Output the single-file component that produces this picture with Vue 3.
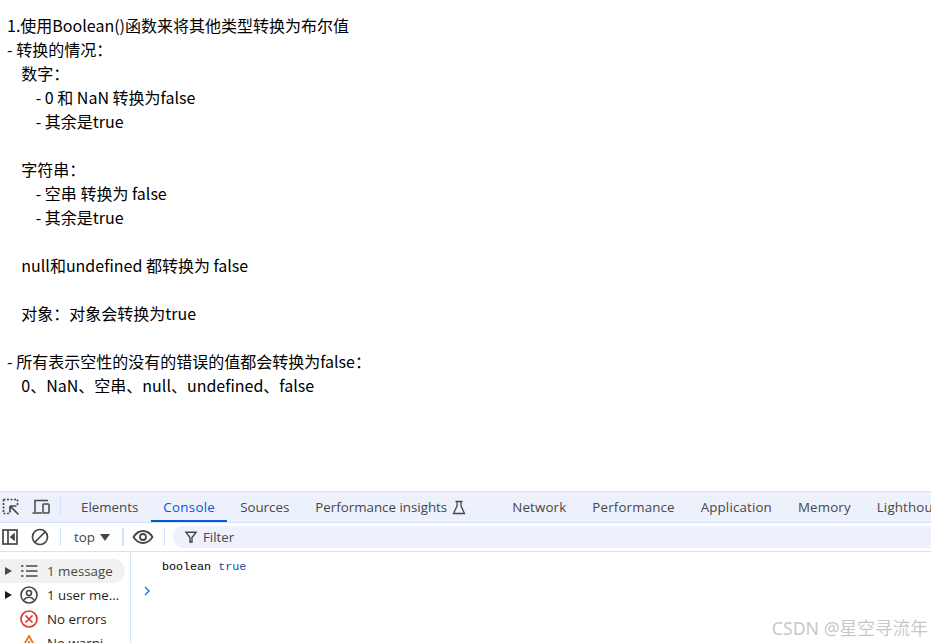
<script setup>
const lines = [
  '1.使用Boolean()函数来将其他类型转换为布尔值',
  '- 转换的情况：',
  '    数字：',
  '        - 0 和 NaN 转换为false',
  '        - 其余是true',
  ' ',
  '    字符串：',
  '        - 空串 转换为 false',
  '        - 其余是true',
  ' ',
  '    null和undefined 都转换为 false',
  ' ',
  '    对象：对象会转换为true',
  ' ',
  '- 所有表示空性的没有的错误的值都会转换为false：',
  '    0、NaN、空串、null、undefined、false',
]
const tabs = [
  { name: 'Elements' },
  { name: 'Console', active: true },
  { name: 'Sources' },
  { name: 'Performance insights', flask: true },
  { name: 'Network', wide: true },
  { name: 'Performance', wide: true },
  { name: 'Application', wide: true },
  { name: 'Memory', wide: true },
  { name: 'Lighthouse', wide: true },
]
</script>

<template>
  <div class="page">
    <main class="doc">
      <div v-for="(l, i) in lines" :key="i" class="line">{{ l }}</div>
    </main>
    <section class="devtools">
      <div class="tabbar">
        <span class="ico-wrap first">
          <svg width="20" height="20" viewBox="0 0 20 20" fill="none" stroke="#474747" stroke-width="1.7">
            <path d="M2.500 2.500h14M2.500 2.500v14M2.500 16.500h6M16.500 2.500v6" stroke-dasharray="2 1.500" />
            <path d="M9 9l8.500 8.500M9 9h6.500M9 9v6.500" />
          </svg>
        </span>
        <span class="ico-wrap">
          <svg width="20" height="20" viewBox="0 0 20 20" fill="none" stroke="#474747" stroke-width="1.500">
            <path d="M4 15V3.500h13" />
            <path d="M1.500 16H11" />
            <rect x="12" y="7" width="6" height="9" rx=".8" />
          </svg>
        </span>
        <span class="sep"></span>
        <div v-for="t in tabs" :key="t.name" class="tab" :class="{ active: t.active, flasked: t.flask, wide: t.wide }">
          {{ t.name }}
          <svg v-if="t.flask" class="flask" width="14" height="15" viewBox="0 0 14 15" fill="none" stroke="#474747" stroke-width="1.300">
            <path d="M3.500 1.500h7M5 1.500v4.500L1.500 13.500h11L9 6V1.500" />
          </svg>
        </div>
      </div>
      <div class="toolbar">
        <svg class="tool-ico" width="18" height="18" viewBox="0 0 18 18" fill="none" stroke="#474747" stroke-width="1.700">
          <rect x="2" y="2" width="14" height="14" />
          <path d="M7 2v14" />
          <path d="M13 6.500L10 9l3 2.500z" fill="#474747" />
        </svg>
        <svg class="tool-ico ban" width="18" height="18" viewBox="0 0 18 18" fill="none" stroke="#474747" stroke-width="1.700">
          <circle cx="9" cy="9" r="7.500" />
          <path d="M4 14L14 4" />
        </svg>
        <span class="sep tool first-sep"></span>
        <span class="ctx">top</span>
        <span class="caret"></span>
        <span class="sep tool accent"></span>
        <svg class="eye" width="22" height="16" viewBox="0 0 22 16" fill="none" stroke="#474747" stroke-width="1.800">
          <path d="M1.500 8C4 4 7 2 11 2S18 4 20.500 8C18 12 15 14 11 14S4 12 1.500 8z" />
          <circle cx="11" cy="8" r="3" />
        </svg>
        <span class="sep tool last-sep"></span>
        <div class="filter">
          <svg width="12" height="12" viewBox="0 0 12 12" fill="none" stroke="#474747" stroke-width="1.400">
            <path d="M.8 1.200h10.400L7 6.500V11H5V6.500z" />
          </svg>
          <span>Filter</span>
        </div>
      </div>
      <div class="body">
        <aside class="side">
          <div class="row selected">
            <span class="arrow"></span>
            <svg class="row-ico" width="18" height="18" viewBox="0 0 18 18" fill="none" stroke="#474747" stroke-width="1.700">
              <path d="M6 4h11.500M6 9h11.500M6 14h11.500M1 4h2.500M1 9h2.500M1 14h2.500" />
            </svg>
            <span>1 message</span>
          </div>
          <div class="row dark">
            <span class="arrow darkarrow"></span>
            <svg class="row-ico" width="18" height="18" viewBox="0 0 18 18" fill="none" stroke="#474747" stroke-width="1.600">
              <circle cx="9" cy="9" r="8" />
              <circle cx="9" cy="7" r="2.500" />
              <path d="M3.800 14c1.500-2 3.300-2.700 5.200-2.700s3.700.7 5.200 2.700" />
            </svg>
            <span>1 user me...</span>
          </div>
          <div class="row dark">
            <span class="arrow none"></span>
            <svg class="row-ico" width="18" height="18" viewBox="0 0 18 18" fill="none" stroke="#dc362e" stroke-width="1.700">
              <circle cx="9" cy="9" r="8" />
              <path d="M5.500 5.500l7 7M12.500 5.500l-7 7" />
            </svg>
            <span>No errors</span>
          </div>
          <div class="row dark">
            <span class="arrow none"></span>
            <svg class="row-ico" width="18" height="18" viewBox="0 0 18 18" fill="none" stroke="#e8710a" stroke-width="1.700">
              <path d="M9 2L17 16H1z" />
              <path d="M9 7v5" />
            </svg>
            <span>No warni</span>
          </div>
        </aside>
        <div class="console">
          <div class="log"><span>boolean</span> <span class="kw">true</span></div>
          <svg class="prompt" width="8" height="10" viewBox="0 0 8 10" fill="none" stroke="#1a73e8" stroke-width="1.400">
            <path d="M2 1l4 4-4 4" />
          </svg>
        </div>
      </div>
      <div class="mark">CSDN @星空寻流年</div>
    </section>
  </div>
</template>

<style>
html, body { margin: 0; background: #fff; overflow: hidden; }
</style>

<style scoped>
.page {
  width: 931px;
  height: 643px;
  display: flex;
  flex-direction: column;
  overflow: hidden;
  background: #fff;
}
.doc {
  height: 491px;
  box-sizing: border-box;
  padding: 13px 0 0 7px;
  flex: none;
  font: 16px/24px "Noto Sans CJK SC", "Noto Sans", sans-serif;
  color: #000;
}
.line { white-space: pre; height: 24px; }
.devtools {
  position: relative;
  flex: 1;
  min-height: 0;
  font-family: "Open Sans", "Noto Sans", sans-serif;
  font-size: 13.330px;
  color: #474747;
}
.tabbar {
  height: 30px;
  border-top: 1px solid #d3e3fd;
  border-bottom: 1px solid #d3e3fd;
  background: #edf1fb;
  display: flex;
  align-items: center;
  overflow: hidden;
  white-space: nowrap;
}
.ico-wrap { width: 20px; height: 20px; margin-left: 10px; flex: none; display: flex; }
.ico-wrap.first { margin-left: 1px; }
.sep { width: 1px; height: 20px; background: #d3e3fd; flex: none; margin: 0 7px 0 9px; }
.tab {
  height: 30px;
  line-height: 30px;
  padding: 0 13px;
  flex: none;
  box-sizing: border-box;
  position: relative;
}
.tab.wide { letter-spacing: .15px; }
.tab.active { color: #0b57d0; border-bottom: 2px solid #0b57d0; padding: 0 12px; letter-spacing: .28px; }
.tab.flasked { padding-right: 33px; display: flex; align-items: center; gap: 5px; }
.toolbar {
  height: 28px;
  display: flex;
  align-items: center;
  border-bottom: 1px solid #d9e2f5;
  background: #fff;
}
.tool-ico { margin-left: 1px; flex: none; }
.tool-ico.ban { margin-left: 12px; }
.sep.tool { height: 18px; }
.sep.first-sep { margin: 0 13px 0 11px; }
.sep.accent { width: 2px; margin: 0 8px 0 12px; }
.sep.last-sep { margin: 0 9px 0 10px; }
.caret {
  width: 0;
  height: 0;
  margin-left: 5px;
  border-left: 5px solid transparent;
  border-right: 5px solid transparent;
  border-top: 7px solid #474747;
}
.eye { flex: none; }
.filter {
  flex: 1;
  height: 22px;
  margin-left: -1px;
  padding-left: 12px;
  background: #edf1fb;
  border-radius: 11px 0 0 11px;
  display: flex;
  align-items: center;
  gap: 6px;
}
.body { display: flex; height: 91px; overflow: hidden; }
.side {
  width: 131px;
  flex: none;
  box-sizing: border-box;
  border-right: 1px solid #d3e3fd;
  padding-top: 7px;
  overflow: hidden;
}
.row {
  height: 24px;
  width: 125px;
  display: flex;
  align-items: center;
  white-space: nowrap;
  border-radius: 0 12px 12px 0;
}
.row.selected { background: #f1f1f1; }
.row.dark { color: #1f1f1f; }
.arrow {
  width: 0;
  height: 0;
  flex: none;
  margin-left: 5px;
  border-top: 4.500px solid transparent;
  border-bottom: 4.500px solid transparent;
  border-left: 7px solid #474747;
}
.arrow.darkarrow { border-left-color: #1f1f1f; }
.arrow.none { border-left-color: transparent; }
.row-ico { flex: none; margin: 0 9px 0 8px; }
.console { flex: 1; padding: 8px 0 0 31px; position: relative; }
.log { font: 11.700px/14px "Liberation Mono", monospace; color: #000; white-space: pre; }
.kw { color: #174ea6; }
.prompt { display: block; margin: 12px 0 0 -19px; }
.mark {
  position: absolute;
  right: 3px;
  bottom: 3px;
  font: 17.700px/24px "Noto Sans", "Noto Sans CJK SC", sans-serif;
  color: #000;
  opacity: .22;
  white-space: nowrap;
}
</style>
